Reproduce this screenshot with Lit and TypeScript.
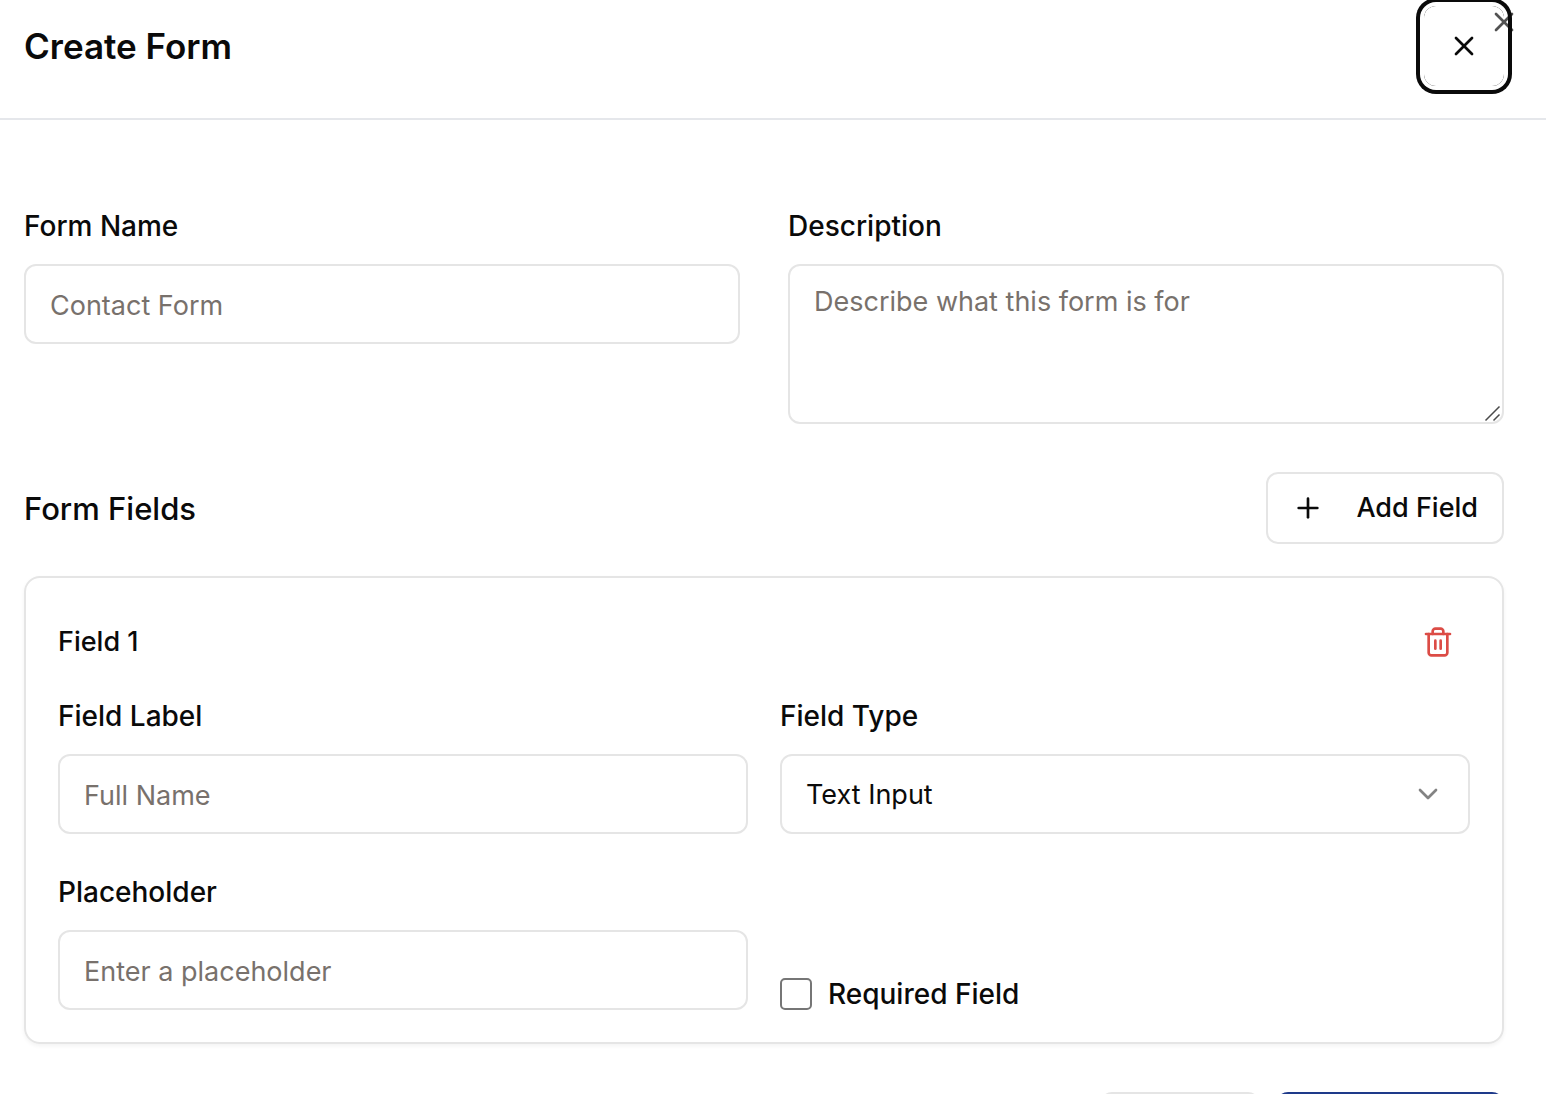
import { LitElement, html, css } from "lit";
import { customElement } from "lit/decorators.js";

const closeIcon = html`<svg class="icon" viewBox="0 0 24 24" aria-hidden="true">
  <path d="M18 6 6 18" /><path d="m6 6 12 12" />
</svg>`;

const plusIcon = html`<svg class="icon" viewBox="0 0 24 24" aria-hidden="true">
  <path d="M5 12h14" /><path d="M12 5v14" />
</svg>`;

const trashIcon = html`<svg class="icon" viewBox="0 0 24 24" aria-hidden="true">
  <path d="M3 6h18" />
  <path d="M19 6v14c0 1-1 2-2 2H7c-1 0-2-1-2-2V6" />
  <path d="M8 6V4c0-1 1-2 2-2h4c1 0 2 1 2 2v2" />
  <path d="M10 11v6" /><path d="M14 11v6" />
</svg>`;

const chevronIcon = html`<svg class="icon chevron" viewBox="0 0 24 24" aria-hidden="true">
  <path d="m6 9 6 6 6-6" />
</svg>`;

@customElement("app-root")
export class AppRoot extends LitElement {
  static styles = css`
    :host {
      display: block;
      height: 100vh;
      overflow: hidden;
      background: #fff;
      color: #0a0a0a;
      font-family: Inter, "Liberation Sans", sans-serif;
      font-size: 28px;
      line-height: 36px;
    }
    * {
      box-sizing: border-box;
    }
    h2,
    h3,
    h4 {
      margin: 0;
    }
    button,
    input,
    textarea,
    select {
      margin: 0;
      font: inherit;
      color: inherit;
    }
    .icon {
      display: block;
      flex: none;
      width: 32px;
      height: 32px;
      fill: none;
      stroke: currentColor;
      stroke-width: 2;
      stroke-linecap: round;
      stroke-linejoin: round;
    }
    .dialog {
      position: relative;
    }
    .header {
      display: flex;
      align-items: center;
      justify-content: space-between;
      padding: 6px 42px 32px 24px;
      border-bottom: 2px solid #e5e7eb;
    }
    .title {
      font-size: 35px;
      line-height: 48px;
      font-weight: 600;
    }
    .icon-button {
      display: flex;
      align-items: center;
      justify-content: center;
      padding: 0;
      border: 0;
      background: transparent;
      border-radius: 12px;
    }
    .close {
      width: 80px;
      height: 80px;
      outline: none;
      box-shadow: 0 0 0 4px #fff, 0 0 0 8px #0a0a0a;
    }
    .dismiss {
      position: absolute;
      top: 6px;
      right: 26px;
      opacity: 0.7;
    }
    .body {
      display: flex;
      flex-direction: column;
      padding: 88px 42px 0 24px;
    }
    .columns {
      display: grid;
      grid-template-columns: 1fr 1fr;
      gap: 40px 48px;
    }
    .card .columns {
      column-gap: 32px;
    }
    .field {
      display: flex;
      flex-direction: column;
      gap: 20px;
    }
    .label {
      font-weight: 500;
    }
    .control {
      width: 100%;
      height: 80px;
      padding: 2px 24px 0;
      border: 2px solid #e5e5e5;
      border-radius: 12px;
      background: #fff;
      font-size: 27px;
      outline: none;
    }
    .control::placeholder {
      color: #78716c;
      opacity: 1;
    }
    .wrap {
      position: relative;
      display: flex;
    }
    .area {
      height: 160px;
      padding: 18px 24px;
      resize: none;
    }
    .grip {
      position: absolute;
      right: 2px;
      bottom: 2px;
      width: 18px;
      height: 18px;
      fill: none;
      stroke: #4a4a4a;
      stroke-width: 1.5;
      pointer-events: none;
    }
    .select {
      appearance: none;
    }
    .chevron {
      position: absolute;
      right: 26px;
      top: 24px;
      opacity: 0.5;
      pointer-events: none;
    }
    .section {
      display: flex;
      align-items: center;
      justify-content: space-between;
      margin: 48px 0 32px;
    }
    .section-title {
      padding-top: 2px;
      font-size: 31px;
      line-height: 40px;
      font-weight: 500;
    }
    .button {
      display: flex;
      align-items: center;
      height: 72px;
      padding: 0 24px;
      border: 2px solid #e5e5e5;
      border-radius: 12px;
      background: #fff;
      font-size: 27px;
      font-weight: 500;
    }
    .add {
      gap: 32px;
    }
    .card {
      padding: 32px;
      border: 2px solid #e5e5e5;
      border-radius: 16px;
      box-shadow: 0 2px 4px rgba(0, 0, 0, 0.05);
    }
    .card-head {
      display: flex;
      align-items: center;
      justify-content: space-between;
      margin-bottom: 24px;
    }
    .card-title {
      font-size: 27px;
      font-weight: 500;
    }
    .remove {
      width: 64px;
      height: 64px;
      color: #dc4c46;
    }
    .check {
      display: flex;
      align-items: center;
      align-self: end;
      gap: 16px;
      height: 32px;
    }
    .box {
      appearance: none;
      width: 32px;
      height: 32px;
      border: 2px solid #767676;
      border-radius: 5px;
      background: #fff;
    }
    .box:checked {
      background: #1e3a8a;
    }
    .footer {
      display: flex;
      justify-content: flex-end;
      gap: 16px;
      margin-top: 48px;
    }
    .footer .button {
      height: 80px;
      min-width: 160px;
    }
    .footer .primary {
      min-width: 228px;
      border-color: #1e3a8a;
      background: #1e3a8a;
    }
  `;

  render() {
    return html`
      <div class="dialog" role="dialog" aria-labelledby="title">
        <header class="header">
          <h2 class="title" id="title">Create Form</h2>
          <button class="icon-button close" type="button" aria-label="Close form">${closeIcon}</button>
        </header>
        <form class="body" @submit=${(e: Event) => e.preventDefault()}>
          <div class="columns">
            <div class="field">
              <label class="label" for="name">Form Name</label>
              <input class="control" id="name" type="text" placeholder="Contact Form" />
            </div>
            <div class="field">
              <label class="label" for="description">Description</label>
              <div class="wrap">
                <textarea class="control area" id="description" placeholder="Describe what this form is for"></textarea>
                <svg class="grip" viewBox="0 0 18 18" aria-hidden="true">
                  <path d="M1.5 16.5l14-14M9.5 16.5l6-6" />
                </svg>
              </div>
            </div>
          </div>
          <div class="section">
            <h3 class="section-title">Form Fields</h3>
            <button class="button add" type="button">${plusIcon}<span>Add Field</span></button>
          </div>
          <section class="card">
            <div class="card-head">
              <h4 class="card-title">Field 1</h4>
              <button class="icon-button remove" type="button" aria-label="Remove field">${trashIcon}</button>
            </div>
            <div class="columns">
              <div class="field">
                <label class="label" for="field-label">Field Label</label>
                <input class="control" id="field-label" type="text" placeholder="Full Name" />
              </div>
              <div class="field">
                <label class="label" for="field-type">Field Type</label>
                <div class="wrap">
                  <select class="control select" id="field-type">
                    <option>Text Input</option>
                  </select>
                  ${chevronIcon}
                </div>
              </div>
              <div class="field">
                <label class="label" for="placeholder">Placeholder</label>
                <input class="control" id="placeholder" type="text" placeholder="Enter a placeholder" />
              </div>
              <div class="check">
                <input class="box" id="required" type="checkbox" />
                <label class="label" for="required">Required Field</label>
              </div>
            </div>
          </section>
          <footer class="footer">
            <button class="button" type="button" aria-label="Cancel"></button>
            <button class="button primary" type="submit" aria-label="Create Form"></button>
          </footer>
        </form>
        <button class="icon-button dismiss" type="button" aria-label="Close">${closeIcon}</button>
      </div>
    `;
  }
}
